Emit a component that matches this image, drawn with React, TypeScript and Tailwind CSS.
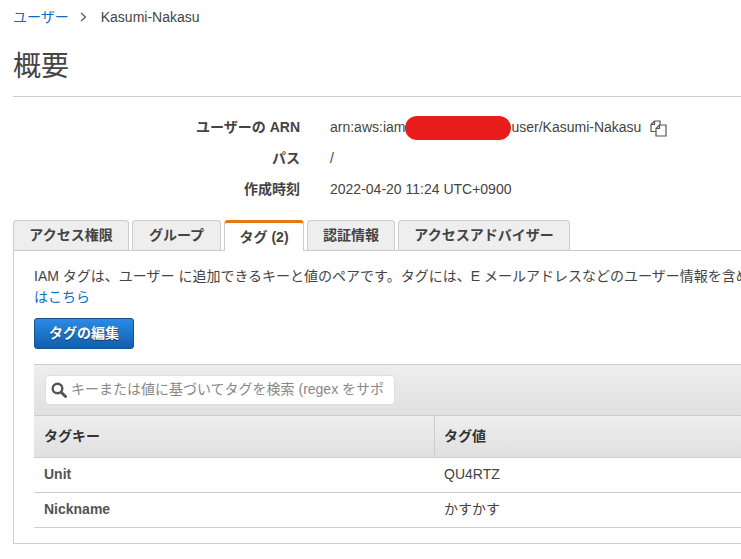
const summaryRows = [
    { label: 'パス', value: '/' },
    { label: '作成時刻', value: '2022-04-20 11:24 UTC+0900' },
];

const tabs = [
    { name: 'アクセス権限', width: 'w-[116px]' },
    { name: 'グループ', width: 'w-[89px]' },
    { name: 'タグ', count: '(2)', width: 'w-[80px]', active: true },
    { name: '認証情報', width: 'w-[88px]' },
    { name: 'アクセスアドバイザー', width: 'w-[172px]' },
];

const tags = [
    { key: 'Unit', value: 'QU4RTZ' },
    { key: 'Nickname', value: 'かすかす' },
];

function CopyIcon() {
    return (
        <svg width="17" height="17" viewBox="0 0 17 17" fill="none" stroke="#555" strokeWidth="1.2" className="ml-[9px] mt-[1px] shrink-0">
            <path d="M5.5 11.5H1V4.5L4.5 1H10V5" />
            <path d="M1 4.5H4.5V1" />
            <path d="M6 16V8.5L9.5 5H16V16Z" />
            <path d="M6 8.5H9.5V5" />
        </svg>
    );
}

function SearchIcon() {
    return (
        <svg width="16" height="16" viewBox="0 0 16 16" fill="none" stroke="#555" className="shrink-0 mr-[4px]">
            <circle cx="6.5" cy="6.5" r="4.8" strokeWidth="2.4" />
            <path d="M10.2 10.2L14.5 14.5" strokeWidth="3" strokeLinecap="round" />
        </svg>
    );
}

export default function App() {
    return (
        <div className="w-[741px] h-[559px] overflow-hidden bg-white text-[14px] text-[#444] font-['Liberation_Sans','Noto_Sans_CJK_JP',sans-serif]">
            {/* Breadcrumb */}
            <div className="flex items-center h-[34px] pl-[13px]">
                <span className="text-[#0f6cc0]">ユーザー</span>
                <svg width="7" height="10" viewBox="0 0 7 10" fill="none" stroke="#555" strokeWidth="1.2" className="ml-[11px] mr-[14px]">
                    <path d="M1 1l4.5 4-4.5 4" />
                </svg>
                <span>Kasumi-Nakasu</span>
            </div>

            {/* Title */}
            <div className="ml-[13px] h-[63px] pt-[3px] border-b border-[#ccc]">
                <h1 className="text-[28px] leading-[60px] text-[#444]">概要</h1>
            </div>

            {/* Summary */}
            <div className="mt-[15px] flex flex-col">
                <div className="flex items-center h-[31px]">
                    <div className="w-[300px] text-right font-bold">ユーザーの ARN</div>
                    <div className="ml-[30px] flex items-center whitespace-nowrap">
                        arn:aws:iam
                        <span className="inline-block w-[106px] h-[24px] rounded-full bg-[#e91c1c]"></span>
                        user/Kasumi-Nakasu
                        <CopyIcon />
                    </div>
                </div>
                {summaryRows.map((row) => (
                    <div key={row.label} className="flex items-center h-[31px]">
                        <div className="w-[300px] text-right font-bold">{row.label}</div>
                        <div className="ml-[30px]">{row.value}</div>
                    </div>
                ))}
            </div>

            {/* Tabs */}
            <div className="mt-[15px] ml-[13px] flex gap-[3px] h-[31px] items-stretch">
                {tabs.map((tab) => (
                    <div
                        key={tab.name}
                        className={
                            tab.active
                                ? `${tab.width} relative z-10 h-[31px] flex items-center justify-center gap-1 rounded-t-[4px] bg-white border-x border-[#ccc] border-t-[3px] border-t-[#e47911] font-bold`
                                : `${tab.width} h-[30px] flex items-center justify-center gap-1 rounded-t-[4px] bg-[#eee] border-x border-t border-[#ccc] font-bold`
                        }
                    >
                        <span>{tab.name}</span>
                        {tab.count && <span>{tab.count}</span>}
                    </div>
                ))}
            </div>

            {/* Panel */}
            <div className="ml-[13px] -mt-px w-[900px] h-[294px] border border-[#ccc] pl-5 pt-[15px]">
                <div className="whitespace-nowrap leading-[21px]">
                    IAM タグは、ユーザー に追加できるキーと値のペアです。タグには、E メールアドレスなどのユーザー情報を含めることができます。
                </div>
                <a className="block leading-[21px] text-[#0f6cc0]">はこちら</a>

                <button className="mt-[10px] w-[100px] h-[31px] rounded-[3px] border border-[#15508f] bg-gradient-to-b from-[#2c8be6] to-[#0f5fae] text-white font-bold [text-shadow:0_1px_1px_rgba(0,0,0,0.5)]">
                    タグの編集
                </button>

                {/* Tag table */}
                <div className="mt-[15px] border-t border-[#ccc]">
                    <div className="h-[51px] flex items-start pt-[10px] pl-[11px] bg-gradient-to-b from-[#eee] to-[#e0e0e0] border-b border-[#ccc]">
                        <div className="flex items-center w-[350px] h-[30px] pb-px rounded-[4px] border border-[#ddd] bg-white pl-[5px] overflow-hidden whitespace-nowrap">
                            <SearchIcon />
                            <span className="text-[#888]">キーまたは値に基づいてタグを検索 (regex をサポ</span>
                        </div>
                    </div>
                    <div className="flex h-[42px] bg-gradient-to-b from-[#eee] to-[#e0e0e0] border-b border-[#ccc] font-bold text-[#333]">
                        <div className="w-[401px] pl-[10px] flex items-center border-r border-[#ccc]">タグキー</div>
                        <div className="pl-[9px] flex items-center">タグ値</div>
                    </div>
                    {tags.map((tag) => (
                        <div key={tag.key} className="flex h-[35px] pb-[2px] items-center border-b border-[#ccc]">
                            <div className="w-[400px] pl-[10px] font-bold text-[#555]">{tag.key}</div>
                            <div className="pl-[10px]">{tag.value}</div>
                        </div>
                    ))}
                </div>
            </div>
        </div>
    );
}
